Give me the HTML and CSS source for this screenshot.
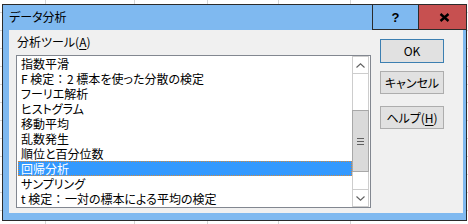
FILE: index.html
```html
<!DOCTYPE html>
<html lang="ja">
<head>
<meta charset="utf-8">
<title>データ分析</title>
<link rel="stylesheet" href="styles.css">
</head>
<body>
<div class="window">
  <div class="titlebar">
    <span class="title">データ分析</span>
    <div class="caption-buttons">
      <div class="cap cap-help">?</div>
      <div class="cap cap-close">
        <svg width="11" height="9" viewBox="0 0 11 9"><path d="M1.5 1 L9.5 8 M9.5 1 L1.5 8" stroke="#000" stroke-width="2.4" fill="none"/></svg>
      </div>
    </div>
  </div>
  <div class="client">
    <div class="left">
      <div class="label">分析ツール(<u>A</u>)</div>
      <div class="listbox">
        <ul class="items">
          <li>指数平滑</li>
          <li>F 検定<span class="fw">：</span> 2 標本を使った分散の検定</li>
          <li>フーリエ解析</li>
          <li>ヒストグラム</li>
          <li>移動平均</li>
          <li>乱数発生</li>
          <li>順位と百分位数</li>
          <li class="selected">回帰分析</li>
          <li>サンプリング</li>
          <li>t 検定<span class="fw">：</span> 一対の標本による平均の検定</li>
        </ul>
        <div class="scrollbar">
          <div class="sb-btn">
            <svg width="9" height="5" viewBox="0 0 9 5"><path d="M0.5 4.5 L4.5 0.8 L8.5 4.5" stroke="#606060" stroke-width="1.1" fill="none"/></svg>
          </div>
          <div class="sb-track top"></div>
          <div class="sb-thumb"><span class="grip"></span><span class="grip"></span><span class="grip"></span></div>
          <div class="sb-track bottom"></div>
          <div class="sb-btn">
            <svg width="9" height="5" viewBox="0 0 9 5"><path d="M0.5 0.5 L4.5 4.2 L8.5 0.5" stroke="#606060" stroke-width="1.1" fill="none"/></svg>
          </div>
        </div>
      </div>
    </div>
    <div class="right">
      <button class="btn default">OK</button>
      <button class="btn">キャンセル</button>
      <button class="btn help">ヘルプ(<u>H</u>)</button>
    </div>
  </div>
</div>
</body>
</html>
```
FILE: styles.css
```css
* { box-sizing: border-box; }

body {
  margin: 0;
  width: 468px;
  height: 224px;
  overflow: hidden;
  font-family: "Noto Sans CJK JP", "Noto Sans", sans-serif;
  font-size: 12px;
  font-feature-settings: "palt";
  background-color: #ffffff;
  background-image:
    linear-gradient(to right, transparent 45px, #d6d6d6 45px, #d6d6d6 46px, transparent 46px),
    linear-gradient(to right, transparent 134px, #d6d6d6 134px, #d6d6d6 135px, transparent 135px),
    linear-gradient(to right, transparent 207px, #d6d6d6 207px, #d6d6d6 208px, transparent 208px),
    linear-gradient(to right, transparent 278px, #d6d6d6 278px, #d6d6d6 279px, transparent 279px),
    linear-gradient(to right, transparent 350px, #d6d6d6 350px, #d6d6d6 351px, transparent 351px),
    repeating-linear-gradient(to bottom, transparent 0, transparent 12px, #d6d6d6 12px, #d6d6d6 13px, transparent 13px, transparent 18px);
}

.window {
  margin: 4px 0 0 2px;
  width: 465px;
  height: 217px;
  border: 1px solid #2b2b2b;
  background: #7fb9f0;
  padding: 0 3px 7px 6px;
  display: flex;
  flex-direction: column;
}

.titlebar {
  height: 25px;
  margin-left: -6px;
  margin-right: -3px;
  padding-left: 5px;
  display: flex;
  align-items: flex-start;
  justify-content: space-between;
}

.title {
  line-height: 22px;
  font-size: 12px;
  color: #000;
  padding-left: 1px;
  padding-top: 1px;
}

.caption-buttons {
  display: flex;
  height: 25px;
}

.cap {
  height: 25px;
  border-left: 1px solid #2b2b2b;
  border-bottom: 1px solid #2b2b2b;
  display: flex;
  align-items: center;
  justify-content: center;
}

.cap-help {
  width: 46px;
  font-family: "Liberation Sans", sans-serif;
  font-weight: bold;
  font-size: 13px;
  color: #000;
}

.cap-close {
  width: 48px;
  background: #c75050;
}

.cap-close svg { display: block; margin-left: 3px; margin-top: 1px; }

.client {
  flex: 1;
  background: #f0f0f0;
  display: flex;
  padding-left: 7px;
}

.left {
  display: flex;
  flex-direction: column;
}

.label {
  height: 25px;
  line-height: 18px;
  padding-top: 3px;
  padding-left: 1px;
  color: #000;
}

.label u, .btn u { text-decoration-thickness: 1px; text-underline-offset: 2px; }

.listbox {
  width: 355px;
  height: 153px;
  border: 1px solid #828790;
  background: #fff;
  display: flex;
  padding-right: 1px;
}

.items {
  list-style: none;
  margin: 0;
  padding: 0 0 0 1px;
  flex: 1;
}

.items li {
  height: 15px;
  line-height: 15px;
  padding-left: 3px;
  color: #000;
  white-space: pre;
  overflow: hidden;
}

.items .fw {
  font-feature-settings: normal;
  margin-right: -2px;
}

.items li.selected {
  background: #3399ff;
  color: #fff;
  outline: 1px dotted #d08a40;
  outline-offset: -1px;
}

.scrollbar {
  width: 17px;
  display: flex;
  flex-direction: column;
  background: #fff;
}

.sb-btn {
  height: 18px;
  border: 1px solid #cdcdcd;
  display: flex;
  align-items: center;
  justify-content: center;
}

.sb-track.top { height: 36px; border-left: 1px solid #cdcdcd; border-right: 1px solid #cdcdcd; }
.sb-track.bottom { flex: 1; border-left: 1px solid #cdcdcd; border-right: 1px solid #cdcdcd; }

.sb-thumb {
  height: 62px;
  background: #dadada;
  border: 1px solid #a8a8a8;
  display: flex;
  flex-direction: column;
  align-items: center;
  justify-content: center;
  gap: 2px;
}

.grip {
  display: block;
  width: 7px;
  height: 1px;
  background: #606060;
}

.right {
  display: flex;
  flex-direction: column;
  margin-left: 9px;
  padding-top: 9px;
}

.btn {
  width: 64px;
  height: 23px;
  padding: 0;
  background: #e1e1e1;
  border: 1px solid #adadad;
  font-family: "Noto Sans CJK JP", "Noto Sans", sans-serif;
  font-size: 12px;
  font-feature-settings: "palt";
  color: #000;
  line-height: 20px;
  margin-bottom: 9px;
}

.btn.default {
  height: 24px;
  border-color: #3c7fb1;
  margin-bottom: 8px;
}

.btn.help { margin-top: 3px; }
```
